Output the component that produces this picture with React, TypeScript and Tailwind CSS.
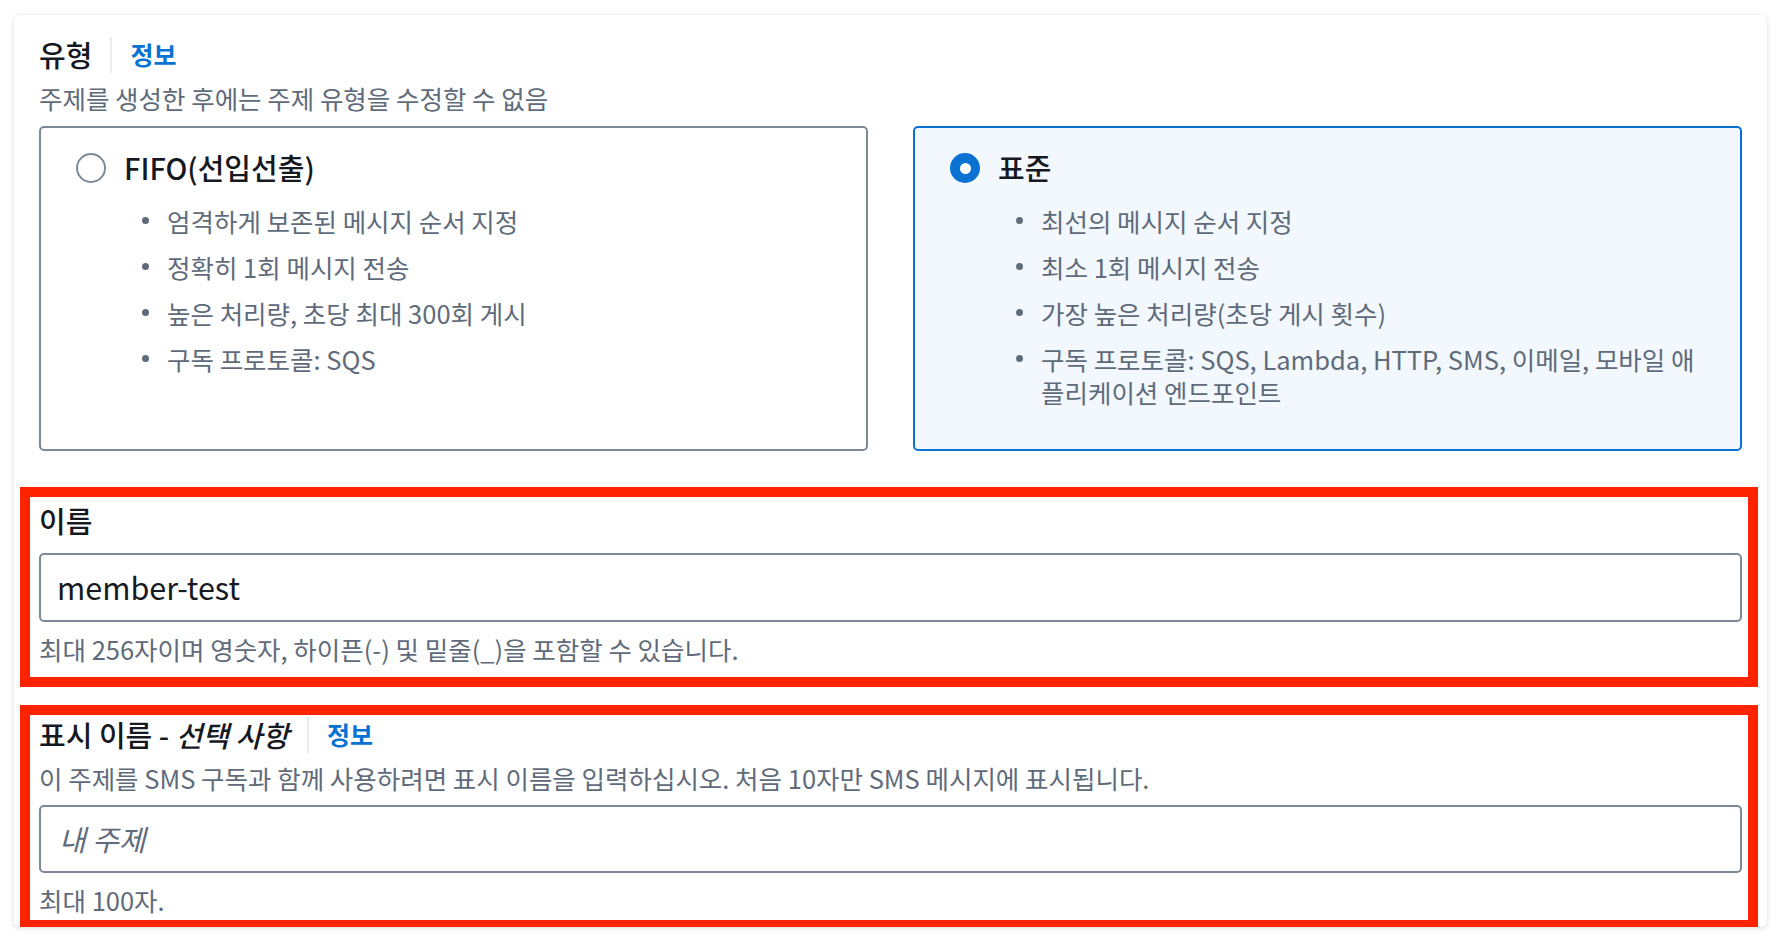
import React from 'react'

const fifoItems = [
  '엄격하게 보존된 메시지 순서 지정',
  '정확히 1회 메시지 전송',
  '높은 처리량, 초당 최대 300회 게시',
  '구독 프로토콜: SQS',
]

const standardItems: React.ReactNode[] = [
  '최선의 메시지 순서 지정',
  '최소 1회 메시지 전송',
  '가장 높은 처리량(초당 게시 횟수)',
  <>
    구독 프로토콜: SQS, Lambda, HTTP, SMS, 이메일, 모바일 애
    <br />
    플리케이션 엔드포인트
  </>,
]

const BulletList = ({ items }: { items: React.ReactNode[] }) => (
  <ul className="mt-[16px] ml-[66px] flex flex-col gap-[13px] pr-[16px]">
    {items.map((item, i) => (
      <li key={i} className="flex items-start text-[25.5px] leading-[33px] text-[#5f6b7a]">
        <span className="mt-[13px] mr-[18px] h-[7px] w-[7px] shrink-0 rounded-full bg-[#5f6b7a]" />
        <span className="whitespace-nowrap">{item}</span>
      </li>
    ))}
  </ul>
)

const TypeCard = ({
  title,
  items,
  selected,
}: {
  title: string
  items: React.ReactNode[]
  selected: boolean
}) => (
  <div
    className={`rounded-[5px] border-2 pt-[20px] pb-10 pl-[35px] ${
      selected ? 'border-[#0972d3] bg-[#f2f8fd]' : 'border-[#7d8998] bg-white'
    }`}
  >
    {/* radio + title */}
    <div className="flex h-[40px] items-center">
      {selected ? (
        <span className="flex h-[30px] w-[30px] items-center justify-center rounded-full bg-[#0972d3]">
          <span className="h-[11px] w-[11px] rounded-full bg-white" />
        </span>
      ) : (
        <span className="h-[30px] w-[30px] rounded-full border-[2.5px] border-[#7d8998] bg-white" />
      )}
      <span className="ml-[18px] text-[29px] font-medium text-[#16191f]">{title}</span>
    </div>
    <BulletList items={items} />
  </div>
)

const InfoLabel = ({ children }: { children: React.ReactNode }) => (
  <div className="flex h-[36px] items-stretch">
    <span className="flex items-center text-[29px] font-medium text-[#16191f]">{children}</span>
    <span className="ml-[18px] w-[2px] bg-[#e9ebed]" />
    <span className="ml-[18px] flex items-center text-[25px] font-bold text-[#0972d3]">정보</span>
  </div>
)

export default function App() {
  return (
    <div
      className="min-h-[942px] w-[1782px] overflow-hidden bg-white pt-[15px]"
      style={{ fontFamily: '"Noto Sans CJK KR", "Noto Sans", sans-serif' }}
    >
      <div className="ml-[14px] h-[912px] w-[1753px] overflow-hidden rounded-[6px] bg-white px-[25px] pt-[22px] shadow-[0_1px_5px_rgba(0,0,0,0.16)]">
        {/* 유형 */}
        <InfoLabel>유형</InfoLabel>
        <p className="mt-[10px] text-[25.5px] leading-[30px] text-[#5f6b7a]">
          주제를 생성한 후에는 주제 유형을 수정할 수 없음
        </p>

        <div className="mt-[13px] grid h-[325px] grid-cols-2 gap-[45px]">
          <TypeCard title="FIFO(선입선출)" items={fifoItems} selected={false} />
          <TypeCard title="표준" items={standardItems} selected />
        </div>

        {/* 이름 */}
        <div className="mt-[36px] ml-[-19px] mr-[-16px] border-[10px] border-[#ff2300] pt-[5px] pr-[6px] pb-[13px] pl-[9px]">
          <div className="h-[36px] text-[29px] leading-[36px] font-medium text-[#16191f]">이름</div>
          <div className="mt-[15px] flex h-[69px] items-center rounded-[5px] border-2 border-[#7d8998] bg-white px-[16px]">
            <span className="text-[30.5px] text-[#16191f]">member-test</span>
          </div>
          <p className="mt-[12px] text-[25.5px] leading-[30px] text-[#5f6b7a]">
            최대 256자이며 영숫자, 하이픈(-) 및 밑줄(_)을 포함할 수 있습니다.
          </p>
        </div>

        {/* 표시 이름 */}
        <div className="mt-[18px] ml-[-19px] mr-[-16px] border-[10px] border-b-[7px] border-[#ff2300] pt-[2px] pr-[6px] pb-[5px] pl-[9px]">
          <InfoLabel>
            표시 이름 -&nbsp;<i>선택 사항</i>
          </InfoLabel>
          <p className="mt-[10px] text-[25.5px] leading-[30px] text-[#5f6b7a]">
            이 주제를 SMS 구독과 함께 사용하려면 표시 이름을 입력하십시오. 처음 10자만 SMS 메시지에 표시됩니다.
          </p>
          <div className="mt-[12px] flex h-[68px] items-center rounded-[5px] border-2 border-[#7d8998] bg-white px-[18px]">
            <span className="text-[29px] italic text-[#5f6b7a]">내 주제</span>
          </div>
          <p className="mt-[12px] text-[25.5px] leading-[30px] text-[#5f6b7a]">최대 100자.</p>
        </div>
      </div>
    </div>
  )
}
